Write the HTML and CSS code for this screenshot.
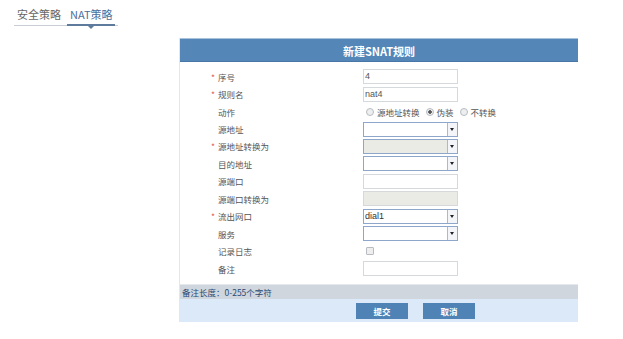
FILE: index.html
```html
<!DOCTYPE html>
<html lang="zh-CN">
  <head>
    <meta charset="UTF-8" />
    <title>新建SNAT规则</title>
    <link rel="stylesheet" href="styles.css">
  </head>
  <body>
    <div class="tabs">
        <span class="tab">安全策略</span>
        <span class="tab active">NAT策略</span>
    </div>

    <div class="panel">
        <div class="panel-title">新建SNAT规则</div>

        <div class="form">
            <div class="row">
                <div class="label"><i>*</i>序号</div>
                <div class="field"><div class="input">4</div></div>
            </div>
            <div class="row">
                <div class="label"><i>*</i>规则名</div>
                <div class="field"><div class="input">nat4</div></div>
            </div>
            <div class="row">
                <div class="label">动作</div>
                <div class="field radios">
                    <span class="radio"></span>源地址转换
                    <span class="radio checked"></span>伪装
                    <span class="radio"></span>不转换
                </div>
            </div>
            <div class="row">
                <div class="label">源地址</div>
                <div class="field"><div class="select"><span class="arrow"></span></div></div>
            </div>
            <div class="row">
                <div class="label"><i>*</i>源地址转换为</div>
                <div class="field"><div class="select disabled"><span class="arrow"></span></div></div>
            </div>
            <div class="row">
                <div class="label">目的地址</div>
                <div class="field"><div class="select"><span class="arrow"></span></div></div>
            </div>
            <div class="row">
                <div class="label">源端口</div>
                <div class="field"><div class="input"></div></div>
            </div>
            <div class="row">
                <div class="label">源端口转换为</div>
                <div class="field"><div class="input disabled"></div></div>
            </div>
            <div class="row">
                <div class="label"><i>*</i>流出网口</div>
                <div class="field"><div class="select">dial1<span class="arrow"></span></div></div>
            </div>
            <div class="row">
                <div class="label">服务</div>
                <div class="field"><div class="select"><span class="arrow"></span></div></div>
            </div>
            <div class="row">
                <div class="label">记录日志</div>
                <div class="field"><span class="checkbox"></span></div>
            </div>
            <div class="row">
                <div class="label">备注</div>
                <div class="field"><div class="input"></div></div>
            </div>
        </div>

        <div class="note">备注长度：0-255个字符</div>
        <div class="actions">
            <button class="btn">提交</button>
            <button class="btn">取消</button>
        </div>
    </div>
  </body>
</html>
```

FILE: styles.css
```css
* {
    margin: 0;
    padding: 0;
    box-sizing: border-box;
}

body {
    font-family: "Noto Sans CJK SC", "Noto Sans", sans-serif;
    background: #fff;
    color: #444;
    width: 623px;
    height: 339px;
    overflow: hidden;
}

.tabs {
    display: flex;
    margin: 4px 0 0 14px;
    width: 104px;
    height: 22px;
    border-bottom: 1px solid #c9ced4;
    align-items: center;
    gap: 4px;
}

.tab {
    font-size: 11px;
    color: #666;
    padding: 0 2px 0 3px;
    height: 22px;
    line-height: 20px;
    position: relative;
}

.tab.active {
    color: #4a6f9c;
    border-bottom: 2px solid #5e7b9e;
    margin-bottom: -1px;
}

.tab.active::after {
    content: '';
    position: absolute;
    left: 50%;
    bottom: -5px;
    margin-left: -3px;
    border-left: 3px solid transparent;
    border-right: 3px solid transparent;
    border-top: 3px solid #5e7b9e;
}

.panel {
    margin: 12px 0 0 179px;
    width: 399px;
    border-left: 1px solid #e3e6ea;
}

.panel-title {
    height: 24px;
    line-height: 24px;
    background: #5486b8;
    border-top: 1px solid #a9c2dc;
    border-bottom: 1px solid #4876a6;
    color: #fff;
    font-size: 11px;
    font-weight: bold;
    text-align: center;
}

.form {
    padding: 6px 0 7px;
}

.row {
    display: grid;
    grid-template-columns: 183px 1fr;
    height: 17.45px;
    align-items: center;
    font-size: 8.5px;
}

.label {
    padding-left: 38px;
    position: relative;
    color: #555;
}

.label i {
    position: absolute;
    left: 31px;
    top: 0;
    font-style: normal;
    color: #e0605a;
}

.field {
    display: flex;
    align-items: center;
}

.input,
.select {
    width: 95px;
    height: 15px;
    border: 1px solid #d6d9dc;
    background: #fff;
    font-family: "Liberation Sans", Arial, sans-serif;
    font-size: 9px;
    line-height: 13px;
    padding-left: 1px;
    color: #555;
}

.select {
    border-color: #8ea6c9;
    position: relative;
    color: #333;
}

.disabled {
    background: #ebebe6;
}

.arrow {
    position: absolute;
    right: 0;
    top: 0;
    width: 10px;
    height: 13px;
    border-left: 1px solid #a8b9d2;
    background: #f3f5f8;
}

.arrow::after {
    content: '';
    position: absolute;
    left: 2px;
    top: 5px;
    border-left: 2.5px solid transparent;
    border-right: 2.5px solid transparent;
    border-top: 3px solid #222;
}

.radios {
    padding-left: 3px;
    color: #555;
}

.radio {
    width: 8px;
    height: 8px;
    border-radius: 50%;
    border: 1px solid #b8bcc0;
    background: #eceeef;
    margin: 0 3px 0 0;
}

.radios .radio:not(:first-child) {
    margin-left: 6px;
}

.radio.checked {
    background: radial-gradient(circle, #555 0 1.5px, #eceeef 2px);
}

.checkbox {
    width: 8px;
    height: 8px;
    margin-left: 3px;
    border: 1px solid #b8bcc0;
    background: #eeeeee;
    border-radius: 1px;
}

.note {
    height: 15px;
    line-height: 15px;
    background: #cfd6dd;
    border-top: 1px solid #e6e9ec;
    font-size: 8.5px;
    color: #2b4a74;
    padding-left: 2px;
}

.actions {
    height: 23px;
    background: #dbe9f8;
    display: flex;
    align-items: center;
    padding-left: 176px;
    gap: 15px;
}

.btn {
    width: 52px;
    height: 16px;
    border: none;
    background: #4f83b6;
    color: #fff;
    font-family: "Noto Sans CJK SC", sans-serif;
    font-size: 8.5px;
    font-weight: bold;
}
```
